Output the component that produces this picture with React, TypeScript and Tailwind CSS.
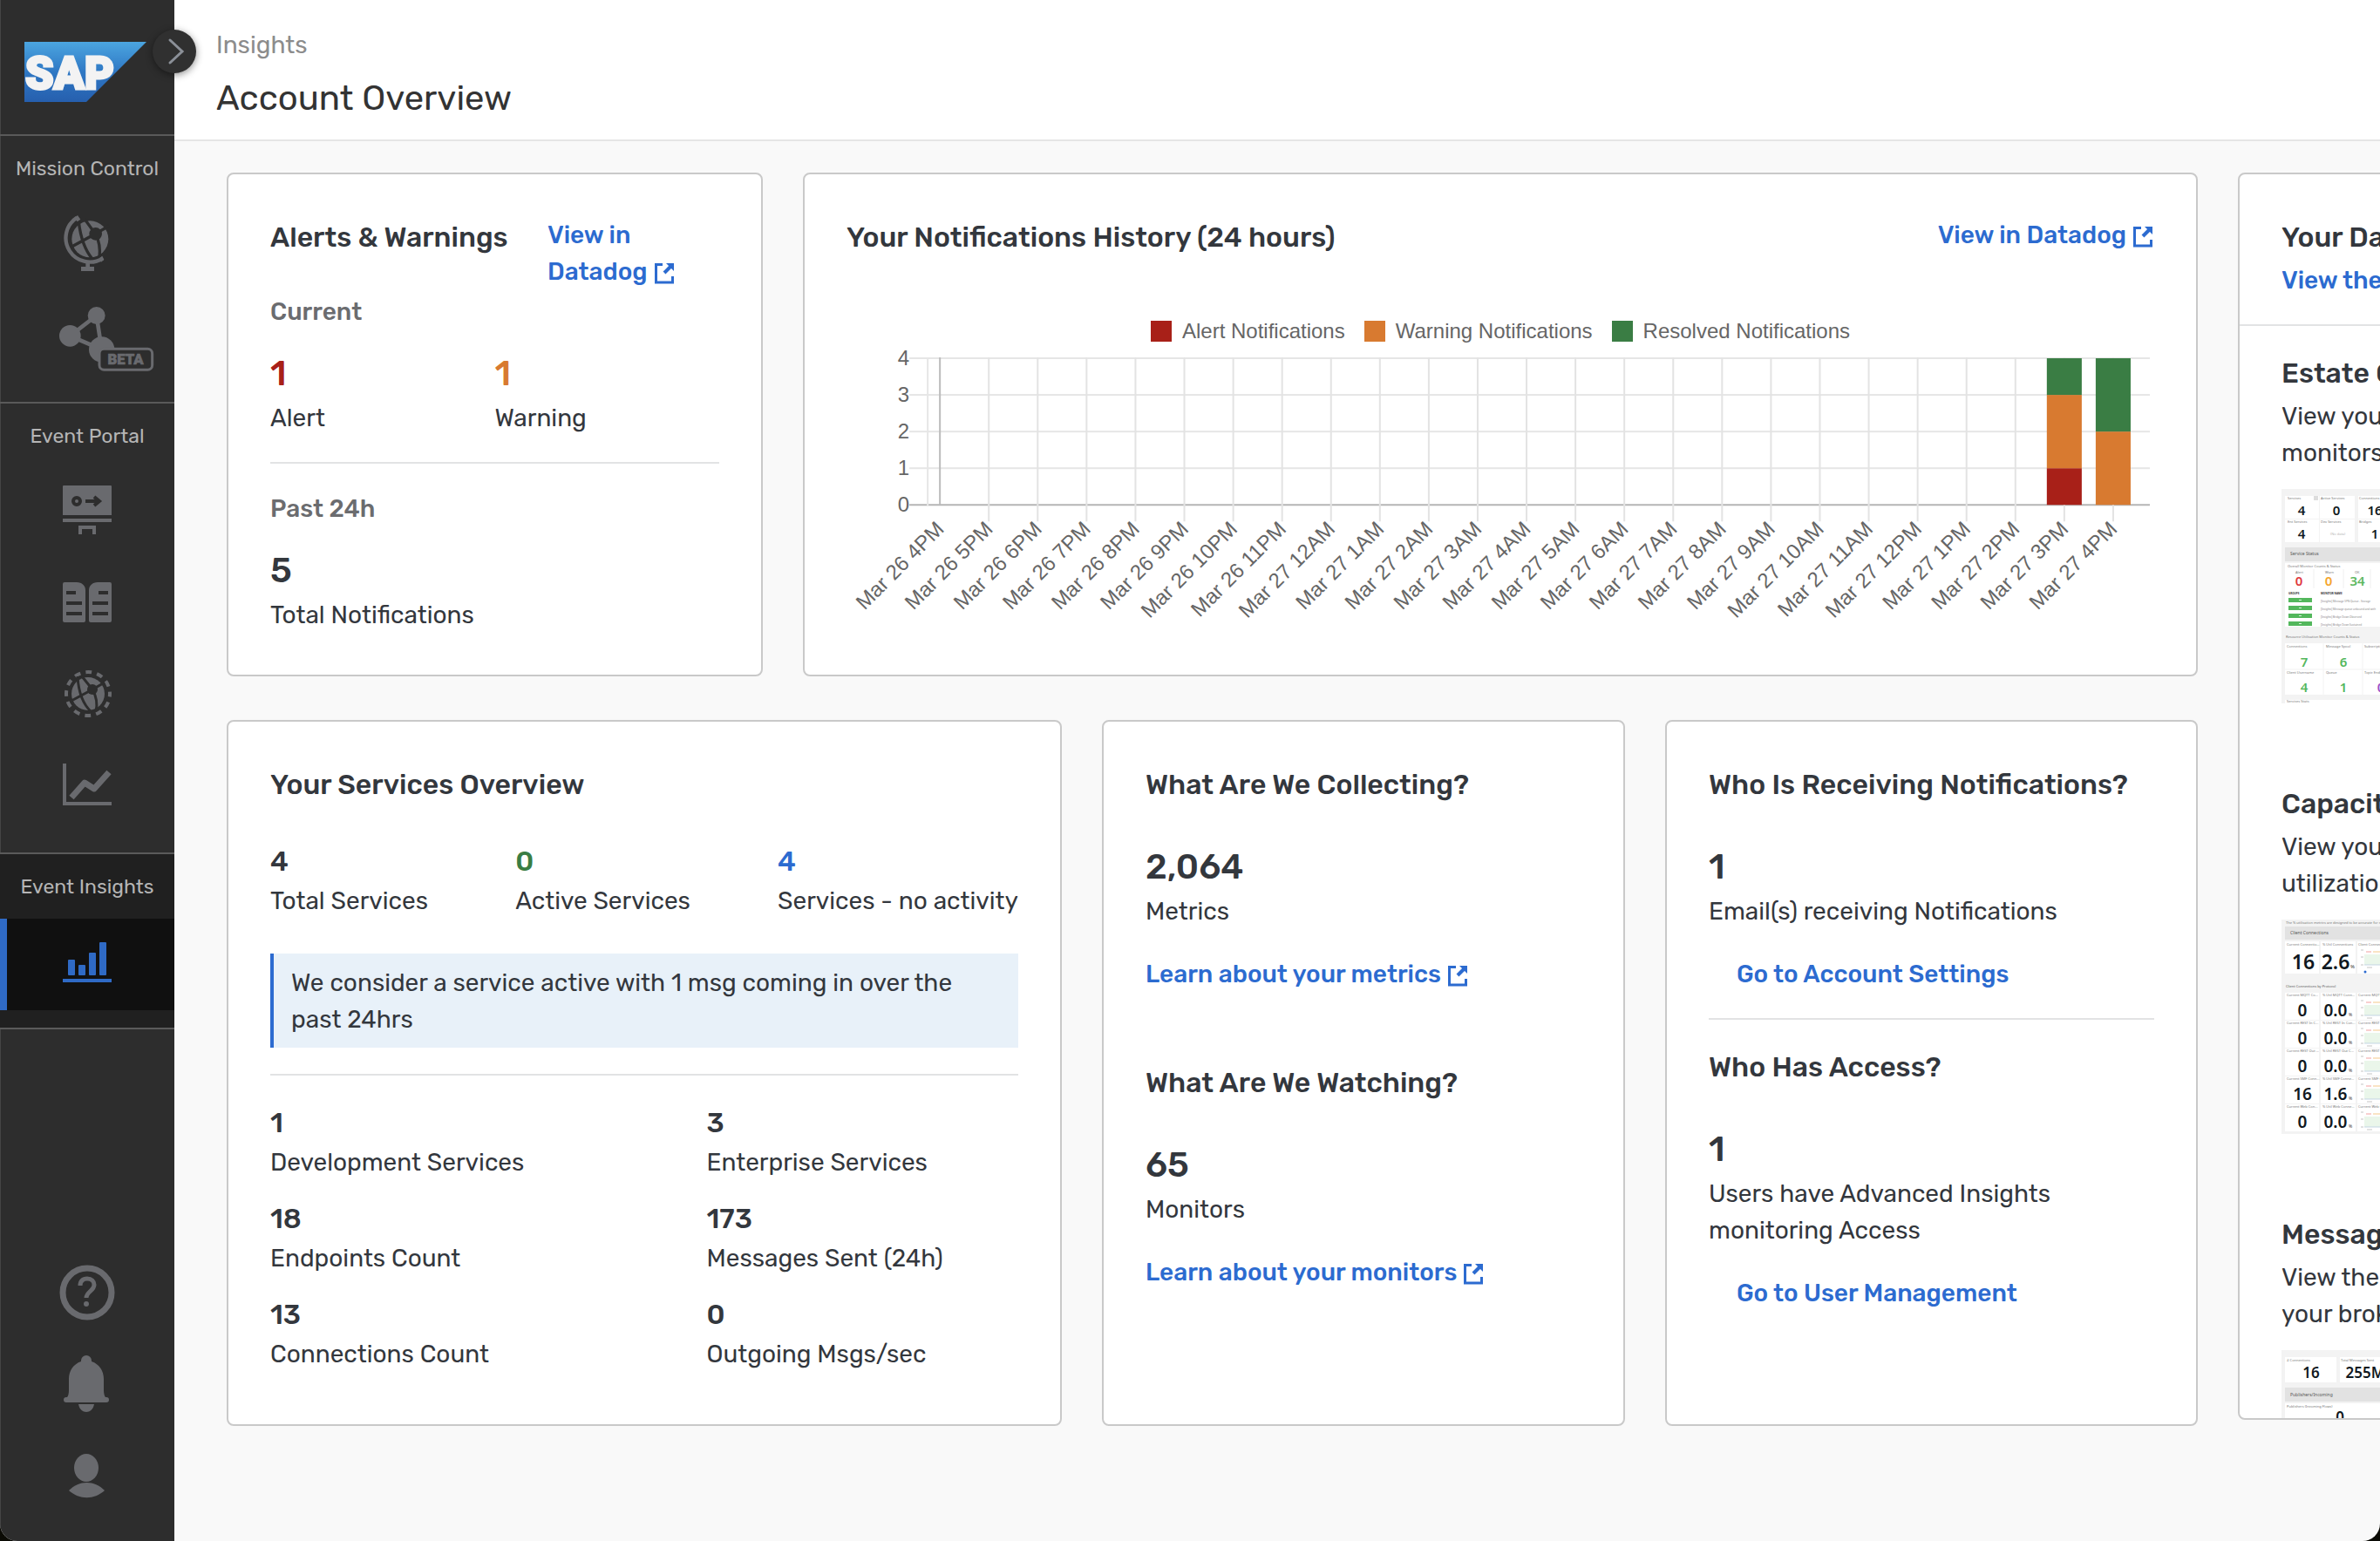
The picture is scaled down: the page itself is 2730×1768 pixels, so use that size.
import type { ReactNode } from "react";

const RED = "#a82018";
const ORANGE = "#d87a30";
const GREEN = "#3a7d44";

/* ---------- Sidebar icons (drawn in a 72 x 72 box) ---------- */

function Icon({ children }: { children: ReactNode }) {
  return (
    <svg width="72" height="72" viewBox="0 0 72 72" fill="currentColor" className="overflow-visible" aria-hidden="true">
      {children}
    </svg>
  );
}

function GlobeStandIcon() {
  return (
    <Icon>
      <g transform="translate(-4 -12) scale(0.3333)">
        <circle cx="130" cy="118" r="63" />
        <g stroke="#2d2d2d" strokeWidth="10" fill="none">
          <path d="M90 50C96 110 112 156 138 186" />
          <path d="M60 148L148 100L112 50" />
          <path d="M148 100L196 72" />
          <path d="M148 100C162 124 166 150 162 184" />
        </g>
        <circle cx="149" cy="100" r="22" fill="#2d2d2d" />
        <path d="M85 44A77 77 0 1 0 174 184" fill="none" stroke="currentColor" strokeWidth="13" />
        <path d="M76 46L87 36L97 50L86 58ZM162 184L172 176L178 188L168 197Z" />
        <path d="M115 198h14v15h15v15H99v-15h16z" />
      </g>
    </Icon>
  );
}

function MeshIcon() {
  return (
    <Icon>
      <g transform="translate(-4 -117) scale(0.3333)">
        <path d="M152 381L61 451L170 498Z" fill="none" stroke="currentColor" strokeWidth="14" />
        <circle cx="61" cy="451" r="37" />
        <circle cx="152" cy="381" r="30" />
        <circle cx="170" cy="498" r="44" />
        <rect x="162" y="496" width="182" height="72" rx="16" fill="#2d2d2d" stroke="currentColor" strokeWidth="9" />
        <text x="252" y="550" textAnchor="middle" stroke="currentColor" strokeWidth="2" className="font-['Roboto',sans-serif] text-[50px] font-black">
          BETA
        </text>
      </g>
    </Icon>
  );
}

function DesignerIcon() {
  return (
    <Icon>
      <path d="M9 3h54a1 1 0 0 1 1 1v33H8V4a1 1 0 0 1 1-1z" />
      <path d="M8 41h56v4H8zM26 49h20v10h-4v-6H30v6h-4z" />
      <circle cx="24" cy="21" r="4" fill="none" stroke="#2d2d2d" strokeWidth="4" />
      <path d="M34 21h15M44 16l6 5l-6 5" fill="none" stroke="#2d2d2d" strokeWidth="4" />
    </Icon>
  );
}

function CatalogIcon() {
  return (
    <Icon>
      <path d="M10 9h14c6 0 10 4 10 9v35a2 2 0 0 1-2 2H10a2 2 0 0 1-2-2V11a2 2 0 0 1 2-2z" />
      <path d="M62 9H48c-6 0-10 4-10 9v35a2 2 0 0 0 2 2h22a2 2 0 0 0 2-2V11a2 2 0 0 0-2-2z" />
      <path d="M12 19h11v4H12zM12 31h18v4H12zM12 43h18v4H12zM49 19h11v4H49zM42 31h18v4H42zM42 43h18v4H42z" fill="#2d2d2d" />
    </Icon>
  );
}

function RuntimeIcon() {
  return (
    <Icon>
      <circle cx="37" cy="32" r="25" fill="none" stroke="currentColor" strokeWidth="4" strokeDasharray="7 6.09" strokeDashoffset="3.5" />
      <circle cx="37" cy="32" r="19" />
      <g stroke="#2d2d2d" strokeWidth="3" fill="none">
        <path d="M25 12C26 30 31 44 41 53" />
        <path d="M16 41L42 27L30 12" />
        <path d="M42 27L56 19" />
        <path d="M42 27C47 36 48 44 46 52" />
      </g>
      <circle cx="42" cy="27" r="6" fill="#2d2d2d" />
    </Icon>
  );
}

function TrendIcon() {
  return (
    <Icon>
      <path d="M8 7h4v44h52v4H8z" />
      <path d="M18 46L33 29L44 36L61 17" fill="none" stroke="currentColor" strokeWidth="7" strokeLinejoin="round" strokeLinecap="butt" />
    </Icon>
  );
}

function InsightsIcon() {
  return (
    <Icon>
      <rect x="14" y="30" width="8" height="18" rx="1" />
      <rect x="26" y="36" width="8" height="12" rx="1" />
      <rect x="38" y="22" width="8" height="26" rx="1" />
      <rect x="50" y="10" width="8" height="38" rx="1" />
      <rect x="8" y="52" width="56" height="4" />
    </Icon>
  );
}

function HelpIcon() {
  return (
    <Icon>
      <circle cx="36" cy="36" r="28" fill="none" stroke="currentColor" strokeWidth="7" />
      <path d="M28 28c0-5 3-8 8-8s8 3 8 7c0 7-9 8-9 15" fill="none" stroke="currentColor" strokeWidth="5" />
      <circle cx="35" cy="49" r="3" />
    </Icon>
  );
}

function BellIcon() {
  return (
    <Icon>
      <path d="M29 9a6 6 0 0 1 12 0v1c9 3 14 11 14 20v13c0 4 1 7 2 8h1a3 3 0 0 1 0 6H12a3 3 0 0 1 0-6h1c1-1 2-4 2-8V30c0-9 5-17 14-20z" />
      <path d="M26 59h18c-1 6-5 9-9 9s-8-3-9-9z" />
    </Icon>
  );
}

function UserIcon() {
  return (
    <Icon>
      <ellipse cx="35" cy="27" rx="14" ry="16" />
      <path d="M15 53c12-12 29-12 41 0c-12 11-29 11-41 0z" />
    </Icon>
  );
}

function SapLogo() {
  return (
    <svg width="140" height="70" viewBox="0 0 140 70" role="img" aria-label="SAP">
      <defs>
        <linearGradient id="sap-fill" x1="0" y1="0" x2="0" y2="1">
          <stop offset="0" stopColor="#4ba5e0" />
          <stop offset="0.5" stopColor="#2f78c4" />
          <stop offset="1" stopColor="#265fae" />
        </linearGradient>
      </defs>
      <path d="M0 0H140L71 69H0z" fill="url(#sap-fill)" />
      <text x="1" y="54" fill="#f3f3f3" stroke="#f3f3f3" strokeWidth="3" className="font-['Roboto',sans-serif] text-[52px] font-black">
        SAP
      </text>
    </svg>
  );
}

function SideButton({ label, children }: { label: string; children: ReactNode }) {
  return (
    <button type="button" aria-label={label} className="flex h-[105px] w-full items-center justify-center text-[#696a6e]">
      {children}
    </button>
  );
}

function SideHeading({ children }: { children: ReactNode }) {
  return <h2 className="flex h-[74px] items-center justify-center text-[23px] whitespace-nowrap text-[#b5b5b5]">{children}</h2>;
}

function Sidebar() {
  return (
    <nav className="relative flex w-[200px] shrink-0 flex-col bg-[#2d2d2d] shadow-[inset_1px_0_0_#454545]">
      <a href="#home" className="flex h-[154px] pt-12 pl-7">
        <SapLogo />
      </a>
      <button
        type="button"
        aria-label="Expand navigation"
        className="absolute top-[34px] -right-[25px] z-10 flex size-[50px] items-center justify-center rounded-full bg-[#303030] pl-1 text-[#8b9098] shadow-[0_2px_8px_rgba(0,0,0,0.45)]"
      >
        <svg width="20" height="32" viewBox="0 0 20 32" fill="none" stroke="currentColor" strokeWidth="3" strokeLinecap="round" aria-hidden="true">
          <path d="M3 3L17 16L3 29" />
        </svg>
      </button>
      <section className="border-t-2 border-[#5a5a5a] pb-[21px]">
        <SideHeading>Mission Control</SideHeading>
        <SideButton label="Cluster Manager"><GlobeStandIcon /></SideButton>
        <SideButton label="Mesh Manager"><MeshIcon /></SideButton>
      </section>
      <section className="border-t-2 border-[#5a5a5a] pb-[21px]">
        <SideHeading>Event Portal</SideHeading>
        <SideButton label="Designer"><DesignerIcon /></SideButton>
        <SideButton label="Catalog"><CatalogIcon /></SideButton>
        <SideButton label="Runtime"><RuntimeIcon /></SideButton>
        <SideButton label="Trends"><TrendIcon /></SideButton>
      </section>
      <section className="border-y-2 border-[#5a5a5a] bg-[#202020] pb-5">
        <SideHeading>Event Insights</SideHeading>
        <button
          type="button"
          aria-label="Insights"
          className="flex h-[105px] w-full items-center justify-center border-l-8 border-[#2f6ac5] bg-[#101010] pr-2 text-[#2f6ac5]"
        >
          <InsightsIcon />
        </button>
      </section>
      <div className="mt-auto pb-[23px]">
        <SideButton label="Help"><HelpIcon /></SideButton>
        <SideButton label="Alerts"><BellIcon /></SideButton>
        <SideButton label="Profile"><UserIcon /></SideButton>
      </div>
    </nav>
  );
}

/* ---------- Shared pieces ---------- */

function ExternalIcon() {
  return (
    <svg width="24" height="26" viewBox="0 0 24 26" className="mr-px ml-[7px] inline-block align-[-5px]" fill="none" stroke="currentColor" strokeWidth="3" aria-hidden="true">
      <path d="M10 3.500H2.500V24H21.500V17" />
      <path d="M12 13L19 6" strokeWidth="4" />
      <path d="M14 2H23V11Z" fill="currentColor" stroke="none" />
    </svg>
  );
}

function TextLink({ children, external = false }: { children: ReactNode; external?: boolean }) {
  return (
    <a href="#details" className="font-medium text-[#2c6bd0]">
      {children}
      {external && <ExternalIcon />}
    </a>
  );
}

function Card({ children, className = "" }: { children: ReactNode; className?: string }) {
  return <section className={`rounded-lg border-2 border-[#c9c9c9] bg-white px-12 pt-12 ${className}`}>{children}</section>;
}

function Title({ children }: { children: ReactNode }) {
  return <h3 className="text-[32px] leading-[48px] font-medium whitespace-nowrap">{children}</h3>;
}

function Divider() {
  return <hr className="my-[30px] border-t-2 border-[#e2e3e4]" />;
}

function Stat({ value, label, large = false, tone = "text-[#33373d]" }: { value: string; label: string; large?: boolean; tone?: string }) {
  return (
    <div>
      <p className={`font-medium ${large ? "text-[40px] leading-[60px]" : "mb-px text-[32px] leading-[48px]"} ${tone}`}>{value}</p>
      <p>{label}</p>
    </div>
  );
}

/* ---------- Notification history chart ---------- */

const hours = [
  "Mar 26 4PM", "Mar 26 5PM", "Mar 26 6PM", "Mar 26 7PM", "Mar 26 8PM", "Mar 26 9PM", "Mar 26 10PM", "Mar 26 11PM",
  "Mar 27 12AM", "Mar 27 1AM", "Mar 27 2AM", "Mar 27 3AM", "Mar 27 4AM", "Mar 27 5AM", "Mar 27 6AM", "Mar 27 7AM",
  "Mar 27 8AM", "Mar 27 9AM", "Mar 27 10AM", "Mar 27 11AM", "Mar 27 12PM", "Mar 27 1PM", "Mar 27 2PM", "Mar 27 3PM",
  "Mar 27 4PM",
];

const stacks = [
  { hour: 23, parts: [{ from: 0, to: 1, fill: RED }, { from: 1, to: 3, fill: ORANGE }, { from: 3, to: 4, fill: GREEN }] },
  { hour: 24, parts: [{ from: 0, to: 2, fill: ORANGE }, { from: 2, to: 4, fill: GREEN }] },
];

const xAt = (hour: number) => Math.round(107 + hour * 56);
const yAt = (value: number) => 187 - value * 42;

function HistoryChart() {
  return (
    <svg viewBox="0 0 1498 330" className="w-full font-['Liberation_Sans',Arial,sans-serif] text-[24px]" fill="#666666" role="img" aria-label="Notifications per hour">
      {[0, 1, 2, 3, 4].map((v) => (
        <g key={v}>
          <text x="72" y={yAt(v) + 8} textAnchor="end">{v}</text>
          <rect x="72" y={yAt(v) - 1} width="1421" height="2" fill={v === 0 ? "#b5b5b5" : "#e6e6e6"} />
        </g>
      ))}
      <rect x="92" y="18" width="2" height="170" fill="#e6e6e6" />
      {hours.map((label, i) => (
        <g key={label}>
          <rect x={xAt(i) - 1} y="18" width="2" height={i === 0 ? 169 : 188} fill={i === 0 ? "#bcbcbc" : "#e3e3e3"} />
          <text transform={`translate(${xAt(i) + 6} 216) rotate(-45)`} textAnchor="end">{label}</text>
        </g>
      ))}
      {stacks.map(({ hour, parts }) =>
        parts.map((p) => (
          <rect key={`${hour}-${p.from}`} x={xAt(hour) - 20} y={yAt(p.to)} width="40" height={yAt(p.from) - yAt(p.to)} fill={p.fill} />
        )),
      )}
    </svg>
  );
}

function LegendItem({ swatch, children }: { swatch: string; children: ReactNode }) {
  return (
    <li className="flex items-center gap-3">
      <span className={`size-6 ${swatch}`} />
      {children}
    </li>
  );
}

/* ---------- Dashboard previews ---------- */

function Preview({ label, children }: { label: string; children: ReactNode }) {
  return (
    <svg width="516" height="246" viewBox="0 0 516 246" className="mt-5 font-['Noto_Sans',sans-serif]" role="img" aria-label={label}>
      <rect width="516" height="246" fill="#f3f3f3" />
      {children}
    </svg>
  );
}

function Panel({ x, y, w, h }: { x: number; y: number; w: number; h: number }) {
  return <rect x={x} y={y} width={w} height={h} fill="#ffffff" />;
}

function Tiny({ x, y, children }: { x: number; y: number; children: ReactNode }) {
  return <text x={x} y={y} fill="#777777" className="text-[4px]">{children}</text>;
}

function Num({ x, y, children, fill = "#101820", size = "text-[15px]" }: { x: number; y: number; children: ReactNode; fill?: string; size?: string }) {
  return <text x={x} y={y} fill={fill} textAnchor="middle" className={`font-semibold ${size}`}>{children}</text>;
}

function EstatePreview() {
  return (
    <Preview label="Estate overview dashboard">
      <Panel x={4} y={8} w={80} h={53} />
      <Panel x={88} y={8} w={80} h={53} />
      <rect x="43" y="8" width="1" height="53" fill="#f3f3f3" />
      <rect x="4" y="34" width="164" height="1" fill="#f3f3f3" />
      <rect x="37" y="8" width="5" height="5" fill="#dddddd" />
      <Tiny x={7} y={12}>Services</Tiny>
      <Tiny x={45} y={12}>Active Services</Tiny>
      <Tiny x={89} y={12}>Connections</Tiny>
      <Num x={23} y={30}>4</Num>
      <Num x={63} y={30}>0</Num>
      <Num x={107} y={30}>16</Num>
      <Tiny x={7} y={39}>Ent Services</Tiny>
      <Tiny x={45} y={39}>Dev Services</Tiny>
      <Tiny x={89} y={39}>Bridges</Tiny>
      <Num x={23} y={57}>4</Num>
      <Num x={107} y={57}>1</Num>
      <text x="56" y="53" fill="#b5b5b5" className="text-[4px]">(No data)</text>
      <rect x="4" y="67" width="512" height="16" fill="#e2e2e2" />
      <text x="10" y="76" fill="#555555" className="text-[5px]">Service Status</text>
      <Panel x={4} y={85} w={512} h={73} />
      <Tiny x={7} y={90}>Overall Monitor Counts &amp; Status</Tiny>
      <Tiny x={16} y={97}>Alert</Tiny>
      <Tiny x={50} y={97}>Warn</Tiny>
      <Tiny x={84} y={97}>OK</Tiny>
      <path d="M37 92V114M71 92V114M102 92V114" stroke="#f0f0f0" />
      <Num x={20} y={111} fill="#e0383e">0</Num>
      <Num x={54} y={111} fill="#f5a52d">0</Num>
      <Num x={87} y={111} fill="#5cb85f">34</Num>
      <text x="8" y="121" fill="#333333" className="text-[3px] font-bold">GROUPS</text>
      <text x="45" y="121" fill="#333333" className="text-[3px] font-bold">MONITOR NAME</text>
      {["[Insights] Message VPN Queue - Storage", "[Insights] Message queue unbound and with", "[Insights] Bridge Down Observed", "[Insights] Bridge Down Sustained"].map((name, i) => (
        <g key={name}>
          <rect x="8" y={125 + i * 9} width="27" height="5" fill="#53b75c" />
          <rect x="20" y={127 + i * 9} width="3" height="1" fill="#d5f0d8" />
          <text x="45" y={130 + i * 9} fill="#888888" className="text-[3px]">{name}</text>
        </g>
      ))}
      <Tiny x={5} y={171}>Resource Utilisation Monitor Counts &amp; Status</Tiny>
      <Panel x={4} y={177} w={512} h={59} />
      <path d="M48 177V236M93 177V236M4 207H516" stroke="#f3f3f3" />
      <Tiny x={6} y={182}>Connections</Tiny>
      <Tiny x={51} y={182}>Message Spool</Tiny>
      <Tiny x={95} y={182}>Subscriptions</Tiny>
      <Num x={26} y={204} fill="#53b75c">7</Num>
      <Num x={71} y={204} fill="#53b75c">6</Num>
      <Tiny x={6} y={212}>Client Username</Tiny>
      <Tiny x={51} y={212}>Queue</Tiny>
      <Tiny x={95} y={212}>Topic Endpoints</Tiny>
      <Num x={26} y={233} fill="#53b75c">4</Num>
      <Num x={71} y={233} fill="#53b75c">1</Num>
      <Num x={114} y={233} fill="#9b4fc8">0</Num>
      <Panel x={4} y={242} w={512} h={4} />
      <Tiny x={6} y={245}>Services Stats</Tiny>
    </Preview>
  );
}

const protocols = [
  { name: "Current MQTT Co...", util: "% Util MQTT Conn...", count: "0", pct: "0.0" },
  { name: "Current REST In C...", util: "% Util REST In Con...", count: "0", pct: "0.0" },
  { name: "Current REST Out ...", util: "% Util REST Out C...", count: "0", pct: "0.0" },
  { name: "Current SMF Conn...", util: "% Util SMF Conne...", count: "16", pct: "1.6" },
  { name: "Current Web Con...", util: "% Util Web Conne...", count: "0", pct: "0.0" },
];

function MiniChart({ y }: { y: number }) {
  return (
    <g>
      <rect x="95" y={y} width="100" height="12" fill="#eaf6ea" />
      <path d={`M97 ${y - 3}h6`} stroke="#f2a0a0" />
      <path d={`M105 ${y - 3}h60`} stroke="#f5c98a" />
      <path d={`M91 ${y - 5}h3M91 ${y + 3}h3M91 ${y + 12}h3M98 ${y + 15}h6`} stroke="#b5b5b5" strokeWidth="0.8" />
      <path d={`M95 ${y + 12}h100`} stroke="#b7cde0" strokeWidth="0.8" />
    </g>
  );
}

function CapacityPreview() {
  return (
    <Preview label="Capacity dashboard">
      <Tiny x={5} y={5}>The % utilisation metrics are designed to be accurate for messaging</Tiny>
      <rect x="4" y="8" width="512" height="15" fill="#e2e2e2" />
      <text x="10" y="17" fill="#555555" className="text-[5px]">Client Connections</text>
      <Panel x={4} y={25} w={39} h={37} />
      <Panel x={45} y={25} w={40} h={37} />
      <Panel x={87} y={25} w={140} h={37} />
      <Tiny x={6} y={30}>Current Connectio...</Tiny>
      <Tiny x={47} y={30}>% Util Connections</Tiny>
      <Tiny x={88} y={30}>Client Connections</Tiny>
      <Num x={25} y={57} size="text-[23px]">16</Num>
      <Num x={62} y={57} size="text-[23px]">2.6</Num>
      <text x="79" y="56" fill="#333333" className="text-[6px]">%</text>
      <MiniChart y={40} />
      <circle cx="96" cy="60" r="1.500" fill="#2c6bd0" />
      <text x="5" y="78" fill="#555555" className="text-[4px]">Client Connections by Protocol</text>
      {protocols.map((p, i) => (
        <g key={p.name} transform={`translate(0 ${i * 32})`}>
          <Panel x={4} y={84} w={39} h={31} />
          <Panel x={45} y={84} w={40} h={31} />
          <Panel x={87} y={84} w={140} h={31} />
          <Tiny x={6} y={88}>{p.name}</Tiny>
          <Tiny x={47} y={88}>{p.util}</Tiny>
          <Tiny x={88} y={88}>{p.name}</Tiny>
          <Num x={24} y={111} size="text-[19px]">{p.count}</Num>
          <Num x={62} y={111} size="text-[19px]">{p.pct}</Num>
          <text x="77" y="111" fill="#333333" className="text-[5px]">%</text>
          <MiniChart y={98} />
        </g>
      ))}
    </Preview>
  );
}

function MessagingPreview() {
  return (
    <Preview label="Messaging dashboard">
      <Panel x={4} y={8} w={59} h={29} />
      <Panel x={67} y={8} w={80} h={29} />
      <Tiny x={6} y={13}># Connections</Tiny>
      <Tiny x={68} y={13}>Total Messages Sent</Tiny>
      <Num x={34} y={32} size="text-[17px]">16</Num>
      <Num x={96} y={32} size="text-[17px]">255M</Num>
      <rect x="4" y="43" width="512" height="16" fill="#e2e2e2" />
      <text x="10" y="53" fill="#555555" className="text-[5px]">Publishers/Incoming</text>
      <Panel x={4} y={61} w={512} h={60} />
      <Tiny x={6} y={66}>Publishers (Incoming Flows)</Tiny>
      <Num x={67} y={83} size="text-[17px]">0</Num>
    </Preview>
  );
}

function DashboardEntry({ title, lines, children }: { title: string; lines: string[]; children: ReactNode }) {
  return (
    <article className="mb-[91px]">
      <Title>{title}</Title>
      <p className="mt-[5px] whitespace-nowrap">
        {lines[0]}
        <br />
        {lines[1]}
      </p>
      {children}
    </article>
  );
}

/* ---------- Page ---------- */

export default function App() {
  return (
    <div className="bg-[#0b0b05] font-['Rubik','Roboto',sans-serif] text-[28px] leading-[42px] text-[#33373d]">
      <div className="flex min-h-screen overflow-hidden rounded-b-[20px] bg-[#f9f9f9]">
        <Sidebar />
        <main className="min-w-0 flex-1">
          <header className="h-[162px] border-b-2 border-[#e5e5e5] bg-white pt-[31px] pl-12">
            <p className="text-[#8c8c8c]">Insights</p>
            <h1 className="mt-2.5 text-[40px] leading-[60px] text-[#333333]">Account Overview</h1>
          </header>

          <div className="flex gap-[46px] overflow-hidden pt-9 pl-[60px]">
            <div className="w-[calc(100%-209px)] shrink-0">
              <div className="grid grid-cols-[615fr_1600fr] gap-[46px]">
                <Card className="pb-[47px]">
                  <div className="mb-1 flex">
                    <div className="w-[318px] shrink-0">
                      <Title>Alerts &amp; Warnings</Title>
                    </div>
                    <p className="w-[160px] pt-px">
                      <TextLink external>
                        View in
                        <br />
                        Datadog
                      </TextLink>
                    </p>
                  </div>
                  <h4 className="mb-5 font-medium text-[#6b6c6f]">Current</h4>
                  <div className="grid grid-cols-2">
                    <Stat large value="1" label="Alert" tone="text-[#a82018]" />
                    <Stat large value="1" label="Warning" tone="text-[#d87a30]" />
                  </div>
                  <hr className="mt-[29px] mb-[31px] border-t-2 border-[#e2e3e4]" />
                  <h4 className="mb-5 font-medium text-[#6b6c6f]">Past 24h</h4>
                  <Stat large value="5" label="Total Notifications" />
                </Card>

                <Card>
                  <div className="flex justify-between">
                    <Title>Your Notifications History (24 hours)</Title>
                    <p className="pt-px">
                      <TextLink external>View in Datadog</TextLink>
                    </p>
                  </div>
                  <ul className="mt-[72px] flex justify-center gap-[22px] font-['Liberation_Sans',Arial,sans-serif] text-[24px] leading-6 text-[#666666]">
                    <LegendItem swatch="bg-[#a82018]">Alert Notifications</LegendItem>
                    <LegendItem swatch="bg-[#d87a30]">Warning Notifications</LegendItem>
                    <LegendItem swatch="bg-[#3a7d44]">Resolved Notifications</LegendItem>
                  </ul>
                  <HistoryChart />
                </Card>
              </div>

              <div className="mt-[50px] grid grid-cols-[958fr_600fr_611fr] gap-[46px]">
                <Card className="pb-[59px]">
                  <Title>Your Services Overview</Title>
                  <div className="mt-10 flex justify-between">
                    <Stat value="4" label="Total Services" />
                    <Stat value="0" label="Active Services" tone="text-[#3a7d44]" />
                    <Stat value="4" label="Services - no activity" tone="text-[#2c6bd0]" />
                  </div>
                  <p className="mt-[39px] border-l-4 border-[#2c6bd0] bg-[#e8f1f9] pt-[13px] pr-5 pb-[11px] pl-5">
                    We consider a service active with 1 msg coming in over the past 24hrs
                  </p>
                  <Divider />
                  <div className="grid grid-cols-[7fr_5fr] gap-y-[19px]">
                    <Stat value="1" label="Development Services" />
                    <Stat value="3" label="Enterprise Services" />
                    <Stat value="18" label="Endpoints Count" />
                    <Stat value="173" label="Messages Sent (24h)" />
                    <Stat value="13" label="Connections Count" />
                    <Stat value="0" label="Outgoing Msgs/sec" />
                  </div>
                </Card>

                <Card>
                  <Title>What Are We Collecting?</Title>
                  <div className="mt-[41px] mb-[30px]">
                    <Stat large value="2,064" label="Metrics" />
                  </div>
                  <TextLink external>Learn about your metrics</TextLink>
                  <div className="mt-[79px]">
                    <Title>What Are We Watching?</Title>
                  </div>
                  <div className="mt-[41px] mb-[30px]">
                    <Stat large value="65" label="Monitors" />
                  </div>
                  <TextLink external>Learn about your monitors</TextLink>
                </Card>

                <Card>
                  <Title>Who Is Receiving Notifications?</Title>
                  <div className="mt-[41px] mb-[30px]">
                    <Stat large value="1" label="Email(s) receiving Notifications" />
                  </div>
                  <p className="pl-8">
                    <TextLink>Go to Account Settings</TextLink>
                  </p>
                  <hr className="mt-[29px] mb-[30px] border-t-2 border-[#e2e3e4]" />
                  <Title>Who Has Access?</Title>
                  <div className="mt-[41px] mb-[30px]">
                    <Stat large value="1" label="Users have Advanced Insights monitoring Access" />
                  </div>
                  <p className="pl-8">
                    <TextLink>Go to User Management</TextLink>
                  </p>
                </Card>
              </div>
            </div>

            <aside className="max-h-[calc(100vh-337px)] w-[616px] shrink-0 self-start overflow-hidden rounded-lg border-2 border-[#c9c9c9] bg-white">
              <div className="border-b-2 border-[#e2e3e4] px-12 pt-12 pb-[29px]">
                <Title>Your Dashboards</Title>
                <p className="mt-[5px]">
                  <TextLink>View them</TextLink>
                </p>
              </div>
              <div className="px-12 pt-[30px]">
                <DashboardEntry title="Estate Overview" lines={["View your", "monitors"]}>
                  <EstatePreview />
                </DashboardEntry>
                <DashboardEntry title="Capacity" lines={["View your", "utilization"]}>
                  <CapacityPreview />
                </DashboardEntry>
                <DashboardEntry title="Messaging" lines={["View the", "your brokers"]}>
                  <MessagingPreview />
                </DashboardEntry>
              </div>
            </aside>
          </div>
        </main>
      </div>
    </div>
  );
}
